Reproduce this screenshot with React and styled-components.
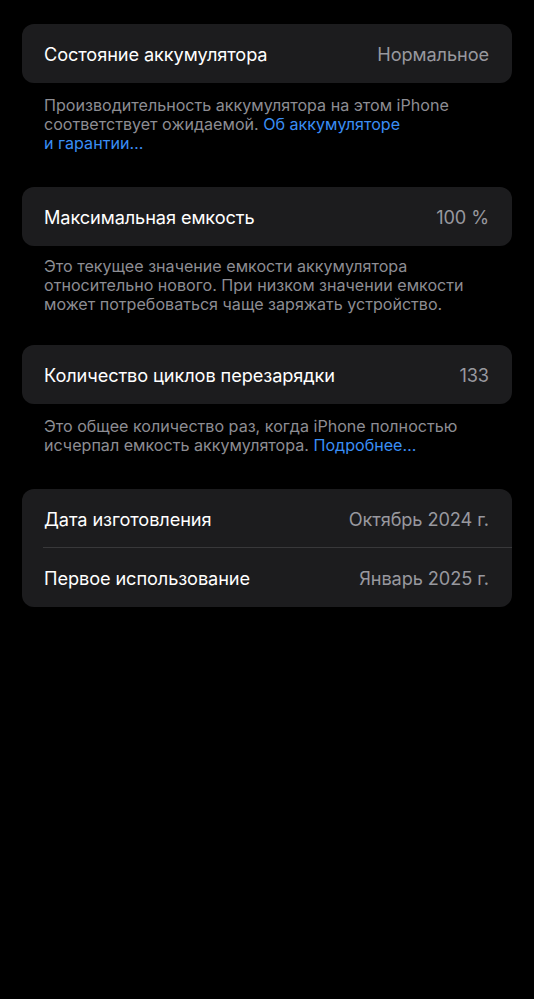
import React from "react";
import styled, { createGlobalStyle } from "styled-components";

const Global = createGlobalStyle`
  html, body { margin: 0; padding: 0; background: #000; }
  body { font-family: Inter, "Noto Sans", "Liberation Sans", sans-serif; -webkit-font-smoothing: antialiased; }
`;

const Page = styled.div`
  min-height: 999px;
  background: #000;
  padding: 24px 22px 0 22px;
  box-sizing: border-box;
  display: flex;
  flex-direction: column;
`;

const Section = styled.section`
  display: flex;
  flex-direction: column;
  margin-bottom: ${(p) => p.$gap}px;
`;

const Card = styled.div`
  background: #1c1c1e;
  border-radius: 12px;
  overflow: hidden;
  display: flex;
  flex-direction: column;
`;

const Row = styled.div`
  height: 59px;
  display: flex;
  align-items: center;
  justify-content: space-between;
  padding: 0 23px 0 22px;
  position: relative;
  box-sizing: border-box;
  ${(p) =>
    p.$divider &&
    `&::after { content: ""; position: absolute; left: 21px; right: 0; bottom: 0; height: 1px; background: #38383a; }`}
`;

const Label = styled.span`
  color: #fff;
  font-size: 18.2px;
  letter-spacing: -0.1px;
`;

const Value = styled.span`
  color: #98989e;
  font-size: 18.2px;
  letter-spacing: -0.1px;
`;

const Footer = styled.p`
  margin: ${(p) => p.$top}px 0 0 0;
  padding: 0 22px;
  color: #8d8d93;
  font-size: 16.1px;
  line-height: 19px;
  letter-spacing: 0;
`;

const Link = styled.span`
  color: #3a8ef5;
`;

export default function App() {
  return (
    <>
      <Global />
      <Page>
        <Section $gap={34}>
          <Card>
            <Row>
              <Label>Состояние аккумулятора</Label>
              <Value>Нормальное</Value>
            </Row>
          </Card>
          <Footer $top={13}>
            Производительность аккумулятора на этом iPhone соответствует ожидаемой.{" "}
            <Link>Об аккумуляторе и&nbsp;гарантии…</Link>
          </Footer>
        </Section>
        <Section $gap={31}>
          <Card>
            <Row>
              <Label>Максимальная емкость</Label>
              <Value>100 %</Value>
            </Row>
          </Card>
          <Footer $top={11}>
            Это текущее значение емкости аккумулятора относительно нового. При низком значении емкости может потребоваться чаще заряжать устройство.
          </Footer>
        </Section>
        <Section $gap={34}>
          <Card>
            <Row>
              <Label>Количество циклов перезарядки</Label>
              <Value>133</Value>
            </Row>
          </Card>
          <Footer $top={13}>
            Это общее количество раз, когда iPhone полностью исчерпал емкость аккумулятора. <Link>Подробнее…</Link>
          </Footer>
        </Section>
        <Section $gap={0}>
          <Card>
            <Row $divider>
              <Label>Дата изготовления</Label>
              <Value>Октябрь 2024 г.</Value>
            </Row>
            <Row>
              <Label>Первое использование</Label>
              <Value>Январь 2025 г.</Value>
            </Row>
          </Card>
        </Section>
      </Page>
    </>
  );
}
